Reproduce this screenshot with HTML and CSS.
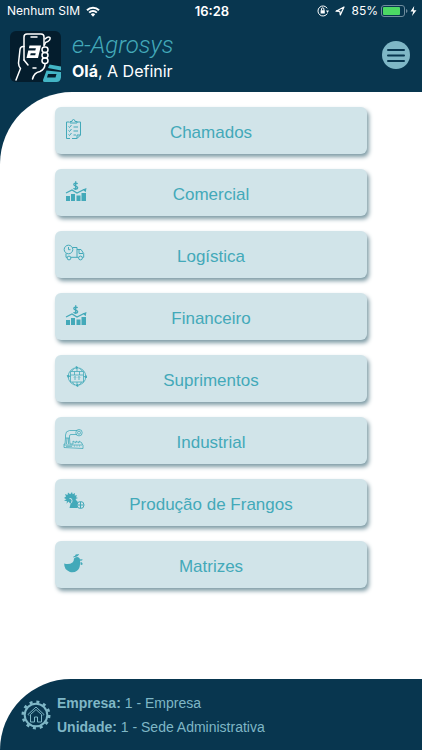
FILE: index.html
```html
<!DOCTYPE html>
<html lang="pt-BR">
<head>
<meta charset="utf-8">
<meta name="viewport" content="width=device-width, initial-scale=1">
<title>e-Agrosys</title>
<link rel="stylesheet" href="styles.css">
</head>
<body>
<svg class="symbols" aria-hidden="true">
  <symbol id="chart" viewBox="0 0 24 24">
    <g fill="currentColor"><path d="M3 16h4v5H3zM8 14h4v7H8zM13.500 15.500h4v5.500h-4zM18.500 13h4.500v8h-4.500z"/><path d="M23.500 8l-.8 4.200-3-2.800z"/></g>
    <path d="M3 13l6-3 5 3 7-3.500M14.600 3.800c-.6-.8-3.800-1-3.800.8s3.900 1.200 3.900 3.100-3.400 1.700-4.100.5M12.700 1.300v8.700" fill="none" stroke="currentColor" stroke-width="1.300"/>
  </symbol>
</svg>
<div class="app">
  <header class="header">
    <div class="status">
      <div class="status-side">
        <span>Nenhum SIM</span>
        <svg class="wifi" viewBox="0 0 14 11" aria-hidden="true"><path d="M1 4.200a8.500 8.500 0 0 1 12 0M3.200 6.600a5.400 5.400 0 0 1 7.600 0" fill="none" stroke="currentColor" stroke-width="2"/><path d="M4.800 8.300a3.200 3.200 0 0 1 4.400 0L7 10.700z" fill="currentColor"/></svg>
      </div>
      <time class="clock">16:28</time>
      <div class="status-side status-end">
        <svg class="lock" viewBox="0 0 12 12" aria-hidden="true"><path d="M10.200 3.300A5 5 0 1 0 10.300 8.500" fill="none" stroke="currentColor"/><path d="M9 5.500h3L10.500 8zM3.600 5.200h4.200v3.400H3.600z" fill="currentColor"/><path d="M4.500 5.500V4a1.200 1.200 0 0 1 2.400 0v1.500" fill="none" stroke="currentColor"/></svg>
        <svg class="arrow" viewBox="0 0 10 10" aria-hidden="true"><path d="M1 5.200L9 1 5.300 9 4.800 5.400z" fill="none" stroke="currentColor" stroke-width="1.200" stroke-linejoin="round"/></svg>
        <span>85%</span>
        <svg class="battery" viewBox="0 0 36 12" aria-hidden="true"><rect x=".5" y=".5" width="23" height="11" rx="2.500" fill="none" stroke="#6f8c9d"/><rect x="2" y="2" width="17" height="8" rx="1" fill="#4cd964"/><path d="M25 4v4q1.500-.5 1.500-2T25 4" fill="#6f8c9d"/><path d="M33.200 1L29.500 6.600h2.700L31 11l4.500-5.800h-2.800z" fill="#fff"/></svg>
      </div>
    </div>
    <div class="brand">
      <svg class="logo" viewBox="0 0 51 51" role="img" aria-label="e-Agrosys">
        <rect width="51" height="51" rx="6" fill="#041d2d"/>
        <g fill="none" stroke="#fff" stroke-width="1.500" stroke-linecap="round" stroke-linejoin="round">
          <path d="M14 29V6q0-3 3-3h14q3 0 3 3v9M21 6h6M23 37h3"/>
          <path d="M14 15.500q-3.500-.5-4 3L8.500 32q0 3 2 5.500L6 49M14 29l4 5"/>
          <path d="M35 8q3-3 5-1.500 1 3-4.500 5l-1 2.500"/>
          <rect x="32" y="16" width="6" height="5.500" rx="2.700"/><rect x="32" y="21.500" width="6" height="5.500" rx="2.700"/><rect x="32" y="27" width="6" height="5.500" rx="2.700"/>
          <path d="M35 33q0 5-5 7.500-6 1-7.500 7.500"/>
        </g>
        <path d="M19.500 14.500H31l-3 12.500H16.500l1.800-7.500h7l.6-2.300h-7zM20.700 22.200l-.5 2h5l.5-2z" fill="#fff" fill-rule="evenodd"/>
        <path d="M39.500 33.500L51 35.500v4l-13-2.500z" fill="#43b5c5"/>
        <path d="M36.500 39.500L51 41v5.500q-.8 4.500-4.500 4.500h-12q-2 0-1.500-2zM38 43l-1 3.500h8.500l1-3.500z" fill="#43b5c5" fill-rule="evenodd"/>
      </svg>
      <div class="brand-text">
        <h1 class="title">e-Agrosys</h1>
        <p class="hello"><b>Olá</b>, A Definir</p>
      </div>
      <button class="menu" type="button" aria-label="Menu">
        <svg viewBox="0 0 28 28" aria-hidden="true"><path d="M6 9h16M6 14.500h16M6 20h16" stroke="#08364f" stroke-width="2" stroke-linecap="round"/></svg>
      </button>
    </div>
  </header>

  <main class="main">
    <nav class="list">
      <button class="item" type="button">
        <svg class="icon" viewBox="0 0 24 24" aria-hidden="true"><path d="M6 4H3.500v16.500H7M9 20.500h5M14 4h3.500v13M17.500 17l-3.500 3.500V17zM7 5V3.500h2Q9 1.500 10.500 1.500T12 3.500h2V5zM5.500 8.500l1 1 2-2.500M10.500 9H15M5.500 12.500l1 1 2-2.500M10.500 13H15M5.500 16.500l1 1 2-2.500M10.500 17H13"/></svg>
        <span>Chamados</span>
      </button>
      <button class="item" type="button"><svg class="icon" aria-hidden="true"><use href="#chart"/></svg><span>Comercial</span></button>
      <button class="item" type="button">
        <svg class="icon" viewBox="0 0 24 24" aria-hidden="true"><circle cx="5.500" cy="7.500" r="4.300"/><path d="M5.500 5v2.700h2M9.500 5.500H14v9.800H8M3 11.500v3.800h1M14 7.500h4l2.700 4v3.800h-1.200M14 15.300h1.500M16 8v3.500h4"/><circle cx="6" cy="16" r="1.900"/><circle cx="17.500" cy="16" r="1.900"/></svg>
        <span>Logística</span>
      </button>
      <button class="item" type="button"><svg class="icon" aria-hidden="true"><use href="#chart"/></svg><span>Financeiro</span></button>
      <button class="item" type="button">
        <svg class="icon fine" viewBox="0 0 24 24" aria-hidden="true"><circle cx="14" cy="10.500" r="8.800"/><path d="M7.500 5.500h13v10.500h-13zM11.500 5.500v3.500h5V5.500M11.500 2.500Q9 4 8.500 5.500M16.500 2.500Q19 4 19.500 5.500M14 1.500v4M14 16v3.500M5 10.500h2.500M20.500 10.500H23M9.500 16q1 2 2.500 3M18.500 16q-1 2-2.500 3M7.500 9h4M16.500 9h4M12 14v-3.500M11 11.500l1-1 1 1M16 14v-3.500M15 11.500l1-1 1 1"/><path d="M13 .5l2 1-2 1zM4.200 9.500l1 2 1-2zM22 11.500l1-2 1 2zM15 18.500l-2 1 2 1z" fill="currentColor"/></svg>
        <span>Suprimentos</span>
      </button>
      <button class="item" type="button">
        <svg class="icon fine" viewBox="0 0 24 24" aria-hidden="true"><path d="M1 19.500V16h1l.5-6h4l.5 6h3v-3l3 2v-2l3 2v-2l3 2v1l1 1v3.500zM2.500 10V7q0-4 4-4.500h8M6.500 10V8q0-1.500 1.500-1.500h6M4 10l-.5 6M5.300 10l.3 6M1 17h18M3 18.300h6M11 18h1M13.500 18h1M16 18h1"/><circle cx="16" cy="4.700" r="3.200"/><circle cx="16" cy="4.700" r="1.500"/></svg>
        <span>Industrial</span>
      </button>
      <button class="item" type="button">
        <svg class="icon" viewBox="0 0 24 24" aria-hidden="true"><path d="M1 8l2-1.500L2 4l2.500 1L5 2.500l2.200 1.700L9 2l.7 2.300L12 3l-.3 2.500 2.300-.2-1 2L15 8l-2.500 1q1 2 2.500 3l-1 4.500 1 1.500H6.500l1-4-2-2.500-2 2.300.5-2.500-3-.8 2.500-1.300z" fill="currentColor" stroke="none"/><path d="M6.500 8.500q2.500-.5 2.500 2t-1.500 3" stroke="#d1e4e9"/><circle cx="17.500" cy="15" r="3.500" fill="#d1e4e9"/><path d="M14.500 15h6M17.500 12v6"/></svg>
        <span>Produção de Frangos</span>
      </button>
      <button class="item" type="button">
        <svg class="icon" viewBox="0 0 24 24" aria-hidden="true"><g fill="currentColor" stroke="none"><path d="M1.200 11.500Q6 13 9.500 10.500 11 9 11 6.500q1-1.500 3-1.500 3 .3 3 3v4q0 4.500-3 6.700-3.500 2.500-7.500 1Q1 17.500 1.200 11.500z"/><path d="M10 5.500q.5-2 2-1.500.5-2.500 2-1.500 1.500-1.200 2 .3L14 4.500zM17.300 7l2.700.7-2.700 1.500zM17.500 10q2.500.5 2 2.500-2 1-2-.5z"/></g></svg>
        <span>Matrizes</span>
      </button>
    </nav>
  </main>

  <footer class="footer">
    <svg class="gear" viewBox="0 0 30 30" aria-hidden="true"><circle cx="15" cy="15" r="11.300" fill="none" stroke="currentColor" stroke-width="2"/><circle cx="15" cy="15" r="13.200" fill="none" stroke="currentColor" stroke-width="2.600" stroke-dasharray="3 3.912"/><path d="M8 15.500l-1-1 8-7.500 8 7.500-1 1M9.500 14.500V22h4v-5h3v5h4v-7.500L15 9.500z" fill="none" stroke="currentColor"/></svg>
    <div class="details">
      <p><b>Empresa:</b> 1 - Empresa</p>
      <p><b>Unidade:</b> 1 - Sede Administrativa</p>
    </div>
  </footer>
</div>
</body>
</html>
```
FILE: styles.css
```css
* { box-sizing: border-box; }
body {
  margin: 0;
  background: #08364f;
  font-family: "Liberation Sans", Arial, sans-serif;
}
h1, p { margin: 0; }
button { font: inherit; border: 0; padding: 0; cursor: pointer; }
.symbols { position: absolute; width: 0; height: 0; }
.app {
  min-height: 100vh;
  display: flex;
  flex-direction: column;
  background: linear-gradient(#08364f 50%, #fff 50%);
}
.header { padding-bottom: 8px; color: #fff; }
.status {
  display: grid;
  grid-template-columns: 1fr auto 1fr;
  align-items: center;
  height: 22px;
  padding: 0 5px 0 7px;
  font: 12px/22px Inter, sans-serif;
}
.status-side { display: flex; align-items: center; gap: 6px; }
.status-end { justify-content: flex-end; }
.clock { font-size: 13px; font-weight: 600; }
.wifi { width: 14px; height: 11px; }
.lock { width: 12px; height: 12px; }
.arrow { width: 10px; height: 10px; }
.battery { width: 36px; height: 12px; margin-left: -3px; }
.brand {
  display: flex;
  align-items: flex-start;
  padding: 9px 12px 0 10px;
}
.logo { width: 51px; height: 51px; flex: none; }
.brand-text { flex: 1; padding: 0 0 1px 11px; }
.title {
  color: #43a9b9;
  font: italic 300 24px/28px Roboto, sans-serif;
}
.hello { font: 16px/24px Inter, sans-serif; }
.menu {
  width: 28px;
  height: 28px;
  margin-top: 10px;
  border-radius: 50%;
  background: #7fb7c6;
}
.menu svg { display: block; }
.main {
  flex: 1;
  padding: 15px 0 24px;
  background: #fff;
  border-top-left-radius: 72px;
}
.list {
  display: grid;
  gap: 15px;
  width: 74%;
  margin: 0 auto;
}
.item {
  display: grid;
  grid-template-columns: 24px 1fr 24px;
  align-items: center;
  height: 47px;
  padding: 4px 8px 0;
  border-radius: 6px;
  background: #d1e4e9;
  box-shadow: 2px 3px 4px #7f9ca6;
  color: #43a9b9;
  font-size: 17px;
}
.icon {
  width: 24px;
  height: 24px;
  align-self: start;
  margin-top: 7px;
  fill: none;
  stroke: currentColor;
}
.icon use { stroke: none; }
.fine { stroke-width: 0.8; }
.footer {
  display: flex;
  align-items: center;
  gap: 6px;
  height: 71px;
  padding: 0 21px;
  background: #08364f;
  border-top-left-radius: 71px;
  color: #7fb7c6;
}
.gear { width: 30px; height: 30px; flex: none; }
.details { font-size: 14px; line-height: 24px; }
```
